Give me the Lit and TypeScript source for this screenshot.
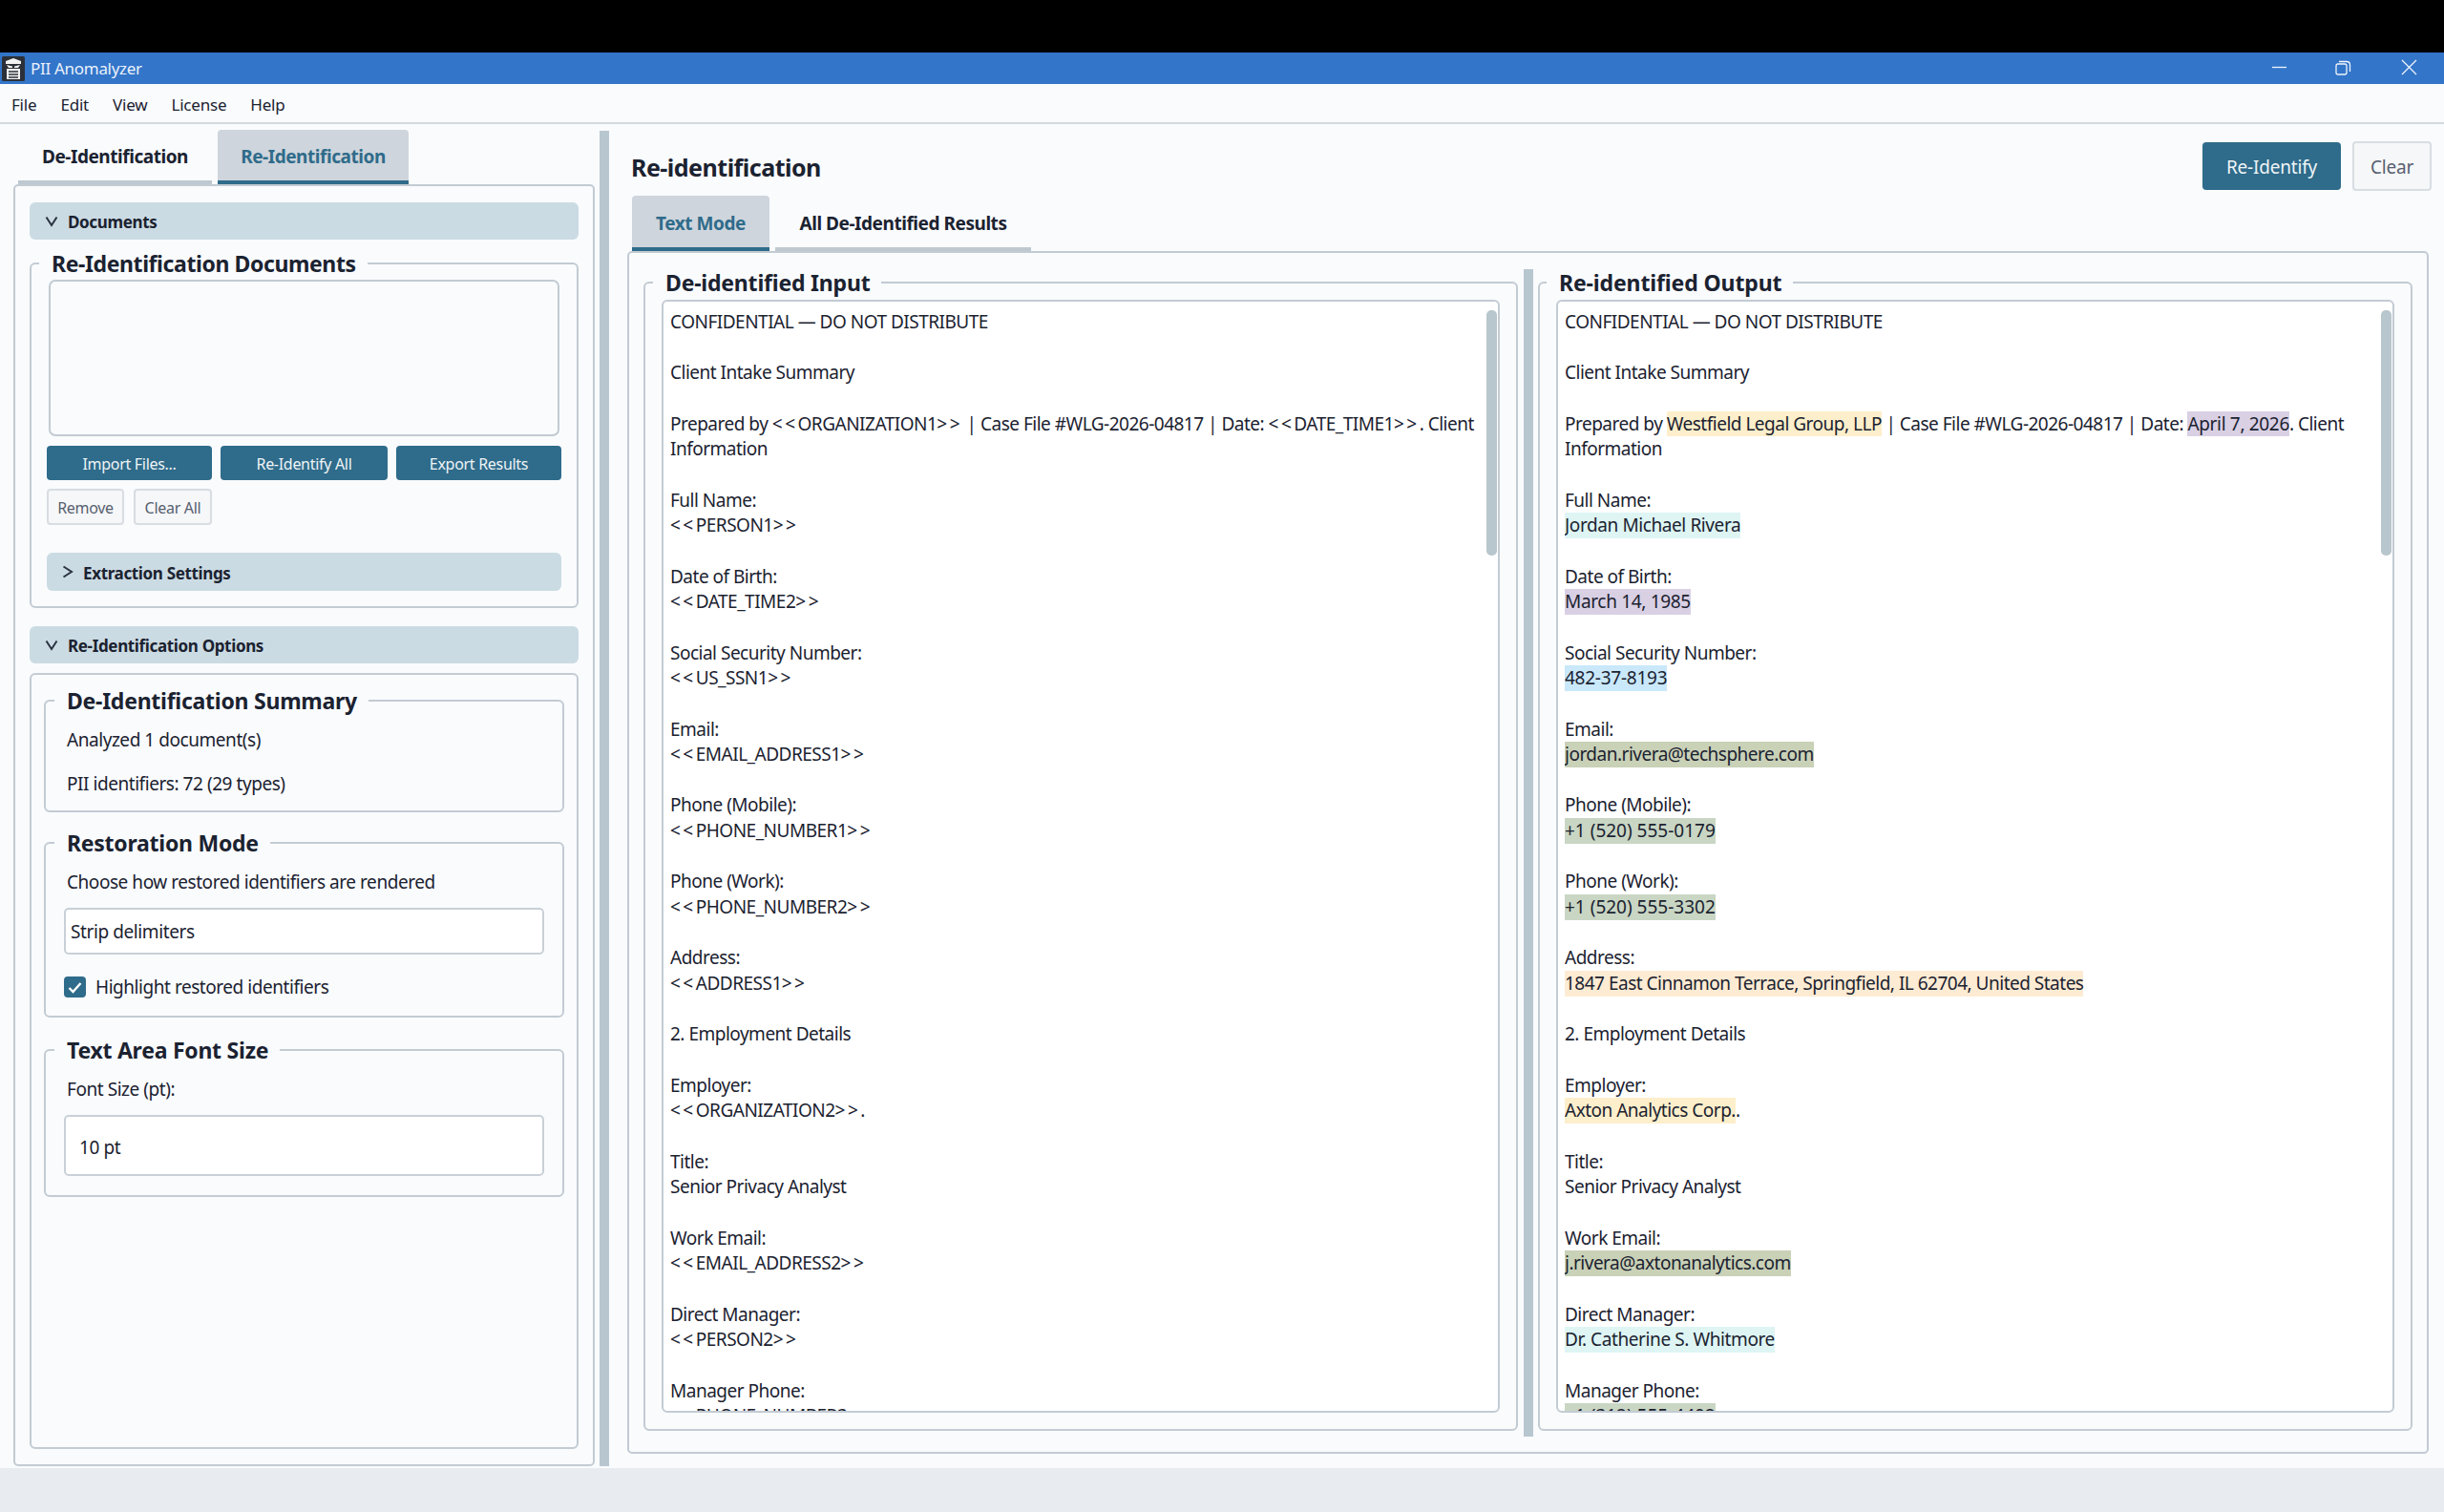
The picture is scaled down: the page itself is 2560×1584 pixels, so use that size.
import { LitElement, html, css } from "lit";
import { customElement } from "lit/decorators.js";

type Seg = string | [string, string];

const pairs: [string, string, string, string][] = [
  ["Full Name:", "<<PERSON1>>", "Jordan Michael Rivera", "person"],
  ["Date of Birth:", "<<DATE_TIME2>>", "March 14, 1985", "date"],
  ["Social Security Number:", "<<US_SSN1>>", "482-37-8193", "ssn"],
  ["Email:", "<<EMAIL_ADDRESS1>>", "jordan.rivera@techsphere.com", "email"],
  ["Phone (Mobile):", "<<PHONE_NUMBER1>>", "+1 (520) 555-0179", "phone"],
  ["Phone (Work):", "<<PHONE_NUMBER2>>", "+1 (520) 555-3302", "phone"],
  ["Address:", "<<ADDRESS1>>", "1847 East Cinnamon Terrace, Springfield, IL 62704, United States", "addr"],
];
const pairs2: [string, string, string, string][] = [
  ["Work Email:", "<<EMAIL_ADDRESS2>>", "j.rivera@axtonanalytics.com", "email"],
  ["Direct Manager:", "<<PERSON2>>", "Dr. Catherine S. Whitmore", "person"],
  ["Manager Phone:", "<<PHONE_NUMBER3>>", "+1 (312) 555-4402", "phone"],
];

function build(right: boolean): Seg[][] {
  const out: Seg[][] = [["CONFIDENTIAL — DO NOT DISTRIBUTE"], [""], ["Client Intake Summary"], [""]];
  out.push(
    right
      ? ["Prepared by ", ["Westfield Legal Group, LLP", "org"], " | Case File #WLG-2026-04817 | Date: ", ["April 7, 2026", "date"], ". Client"]
      : ["Prepared by <<ORGANIZATION1>> | Case File #WLG-2026-04817 | Date: <<DATE_TIME1>>. Client"]
  );
  out.push(["Information"], [""]);
  const add = (p: [string, string, string, string]) => {
    out.push([p[0]]);
    out.push(right ? [[p[2], p[3]]] : [p[1]]);
  };
  pairs.forEach((p) => {
    add(p);
    out.push([""]);
  });
  out.push(["2. Employment Details"], [""]);
  out.push(["Employer:"]);
  out.push(right ? [["Axton Analytics Corp.", "org"], "."] : ["<<ORGANIZATION2>>."]);
  out.push([""], ["Title:"], ["Senior Privacy Analyst"], [""]);
  pairs2.forEach((p, i) => {
    add(p);
    if (i < pairs2.length - 1) out.push([""]);
  });
  return out;
}

@customElement("app-root")
export class AppRoot extends LitElement {
  static styles = css`
    :host {
      display: flex;
      flex-direction: column;
      width: 2560px;
      height: 1584px;
      overflow: hidden;
      background: #f9fbfd;
      color: #1b2230;
      font-family: "Noto Sans", "Open Sans", sans-serif;
      font-size: 19px;
      --line: #c3cbd3;
      --teal: #2f6b8a;
    }
    .black { height: 55px; background: #000; flex: none; }
    .titlebar {
      height: 33px; flex: none; background: #3375c9; color: #e9f1fb;
      display: flex; align-items: center; font-size: 17px; letter-spacing: -0.3px;
    }
    .titlebar .app-icon { width: 24px; height: 26px; margin-left: 2px; margin-right: 6px; flex: none; }
    .titlebar .ctl { margin-left: auto; display: flex; }
    .ctl svg { display: block; }
    .menubar {
      height: 42px; flex: none; box-sizing: border-box; border-bottom: 2px solid #d3d9de;
      display: flex; align-items: center; padding-left: 12px; gap: 25px; padding-top: 2px;
      font-size: 17px; letter-spacing: -0.2px;
    }
    .main { flex: 1; min-height: 0; display: flex; }
    .status { height: 46px; flex: none; background: #e8ecf1; }

    .left { width: 609px; margin-left: 14px; margin-bottom: 2px; flex: none; display: flex; flex-direction: column; }
    .tabs { display: flex; flex: none; font-weight: 700; }
    .left .tabs { margin-top: 6px; height: 57px; padding-left: 5px; gap: 6px; }
    .tab {
      box-sizing: border-box; display: flex; align-items: center; justify-content: center;
      border-bottom: 4px solid #bec8d0; border-radius: 4px 4px 0 0; letter-spacing: -0.45px; font-size: 19px;
      padding-top: 3px;
    }
    .tab.on { background: #ced5dc; color: var(--teal); border-bottom-color: var(--teal); }
    .frame {
      box-sizing: border-box; border: 2px solid var(--line); border-radius: 5px; background: #f9fbfd;
    }
    .left .frame {
      flex: 1; min-height: 0; padding: 17px 15px 16px;
      display: flex; flex-direction: column;
    }
    .sec {
      box-sizing: border-box; height: 39px; flex: none; background: #cbdbe3; border-radius: 6px;
      display: flex; align-items: center; gap: 10px; padding-left: 16px;
      font-weight: 700; font-size: 17px; letter-spacing: -0.35px;
    }
    .sec span { padding-top: 2px; }
    .sec svg { flex: none; }
    fieldset {
      margin: 0; min-width: 0; box-sizing: border-box;
      border: 2px solid var(--line); border-radius: 6px;
    }
    legend {
      height: 32px; line-height: 32px; padding: 0 12px 0 13px; font-weight: 700;
      font-size: 23px; letter-spacing: -0.25px; margin-left: -8px;
    }
    .docs { margin-top: 10px; height: 376px; padding: 0 16px; flex: none; }
    .docs legend { height: 30px; line-height: 30px; letter-spacing: -0.4px; }
    .list {
      height: 164px; margin: 2px 2px 0; box-sizing: border-box;
      border: 2px solid var(--line); border-radius: 7px;
    }
    .btnrow { display: grid; grid-template-columns: 173px 175px 173px; gap: 9px; margin-top: 10px; }
    .btn {
      box-sizing: border-box; display: flex; align-items: center; justify-content: center;
      border-radius: 4px; font-size: 16px; letter-spacing: -0.3px; padding-top: 1px;
    }
    .btn.pri { background: var(--teal); color: #eef4f7; height: 36px; }
    .btn.sec2 {
      border: 2px solid #d8dde2; background: #f6f7f8; color: #566070; height: 38px;
    }
    .btnrow2 { display: flex; gap: 10px; margin-top: 9px; }
    .sec.sub { height: 40px; margin-top: 29px; }
    .opts { margin-top: 19px; }
    .container {
      flex: 1; min-height: 0; margin-top: 10px; padding: 11px 13px 0; box-sizing: border-box;
      border: 2px solid var(--line); border-radius: 6px;
      display: flex; flex-direction: column; gap: 16px;
    }
    .container fieldset { padding: 0 19px 0 22px; flex: none; }
    .container legend { margin-left: -13px; }
    .g1 { height: 133px; }
    .g2 { height: 199px; }
    .g3 { height: 170px; margin-top: 2px; }
    .row { font-size: 19px; letter-spacing: -0.45px; line-height: 26px; }
    .g1 .row.a { margin-top: 12px; }
    .g1 .row.b { margin-top: 20px; }
    .g2 .row.a { margin-top: 12px; }
    .input {
      box-sizing: border-box; background: #fff; border: 2px solid #c9d0d7; border-radius: 5px;
      margin-left: -3px; display: flex; align-items: center;
      font-size: 19px; letter-spacing: -0.4px;
    }
    .combo { height: 49px; margin-top: 14px; padding-left: 5px; }
    .check { display: flex; align-items: center; margin: 21px 0 0 -3px; gap: 10px; font-size: 19px; letter-spacing: -0.45px; }
    .check .box {
      width: 23px; height: 22px; background: var(--teal); border-radius: 4px; flex: none;
      display: flex; align-items: center; justify-content: center;
    }
    .g3 .row.a { margin-top: 12px; }
    .spin { height: 64px; margin-top: 14px; padding: 3px 0 0 14px; }

    .split { width: 10px; margin: 7px 0 2px 5px; background: #b8c6d0; flex: none; }
    .right {
      flex: 1; min-width: 0; display: flex; flex-direction: column;
      padding: 18px 13px 15px 19px;
    }
    .head { display: flex; align-items: center; height: 52px; flex: none; padding-left: 4px; }
    .head h1 { margin: 0; padding-top: 1px; font-size: 25px; font-weight: 700; letter-spacing: -0.5px; }
    .head .sp { flex: 1; }
    .head .btn { font-size: 19px; letter-spacing: -0.2px; padding-top: 2px; }
    .head .btn.pri { width: 145px; height: 50px; margin-right: 12px; }
    .head .btn.sec2 { width: 83px; height: 52px; }
    .right .tabs { height: 58px; margin-top: 5px; padding-left: 5px; gap: 6px; }
    .right .frame {
      flex: 1; min-height: 0; margin-right: 3px; padding: 15px 15px 16px;
      display: flex;
    }
    .pane { flex: 1; min-width: 0; margin-bottom: 6px; padding: 0 17px 17px; display: flex; flex-direction: column; }
    .pane legend { margin-left: -10px; letter-spacing: -0.12px; }
    .pane.first legend { margin-left: -9px; letter-spacing: -0.2px; }
    .vsplit { width: 10px; margin: 2px 5px 0 6px; background: #b8c6d0; flex: none; }
    .text {
      flex: 1; min-height: 0; position: relative; overflow: hidden; box-sizing: border-box;
      margin-top: 2px; background: #fff; border: 2px solid var(--line); border-radius: 6px;
      padding: 8px 0 0 7px; font-size: 19px; letter-spacing: -0.5px;
    }
    .text .clip { height: 100%; overflow: hidden; }
    .ln { height: 26.67px; line-height: 26.67px; white-space: pre; }
    .ln span { display: inline-block; height: 26.67px; }
    .ln .ang { letter-spacing: 2.5px; }
    .org { background: #fdefcb; }
    .date { background: #d9d0e4; letter-spacing: -0.33px; }
    .person { background: #def5f4; letter-spacing: -0.4px; }
    .ssn { background: #c9e8fa; letter-spacing: -0.25px; }
    .email { background: #c9d1b7; }
    .phone { background: #c9d6c4; letter-spacing: 0; }
    .addr { background: #fdebd3; }
    .thumb {
      position: absolute; top: 9px; right: 1px; width: 11px; height: 257px;
      background: #b8c6cd; border-radius: 5px;
    }
  `;

  chev(dir: "down" | "right") {
    return dir === "down"
      ? html`<svg width="14" height="12" viewBox="0 0 14 12" fill="none" stroke="#2a3240" stroke-width="2"><path d="M1.5 1.5 L7 10 L12.5 1.5"/></svg>`
      : html`<svg width="12" height="14" viewBox="0 0 12 14" fill="none" stroke="#2a3240" stroke-width="2"><path d="M1.5 1.5 L10 7 L1.5 12.5"/></svg>`;
  }

  plain(s: string) {
    return s
      .split(/(<<|>>)/)
      .map((p) => (p === "<<" || p === ">>" ? html`<span class="ang">${p}</span>` : p));
  }

  pane(title: string, right: boolean) {
    return html`<fieldset class="pane ${right ? "" : "first"}">
      <legend>${title}</legend>
      <div class="text">
        <div class="clip">
          ${build(right).map(
            (l) => html`<div class="ln">${l.map((s) =>
              typeof s === "string" ? this.plain(s) : html`<span class=${s[1]}>${s[0]}</span>`
            )}</div>`
          )}
        </div>
        <div class="thumb"></div>
      </div>
    </fieldset>`;
  }

  render() {
    return html`
      <div class="black"></div>
      <div class="titlebar">
        <svg class="app-icon" viewBox="0 0 24 26">
          <rect width="24" height="26" rx="1.5" fill="#2b3038"/>
          <path d="M4 5 L12 2 L20 5 L20 8 L4 8 Z" fill="#f2f2f2"/>
          <path d="M5 9 L11 10.5 L11 12 L7 12 Z M19 9 L13 10.5 L13 12 L17 12 Z" fill="#f2f2f2"/>
          <rect x="5" y="13" width="14" height="11" fill="#f2f2f2"/>
          <path d="M7 16 H17 M7 19 H17 M7 22 H17" stroke="#2b3038" stroke-width="1.4"/>
        </svg>
        <span>PII Anomalyzer</span>
        <div class="ctl">
          <svg width="195" height="33" viewBox="0 0 195 33" fill="none" stroke="#eef4fb" stroke-width="1.3">
            <path d="M15 15.5 H30"/>
            <rect x="82" y="12" width="11" height="11" rx="2"/>
            <path d="M85 9.5 H93 Q96.5 9.5 96.5 13 V20"/>
            <path d="M151 8 L166 23 M166 8 L151 23"/>
          </svg>
        </div>
      </div>
      <div class="menubar">
        <span>File</span><span>Edit</span><span>View</span><span>License</span><span>Help</span>
      </div>
      <div class="main">
        <div class="left">
          <div class="tabs">
            <div class="tab" style="width:203px">De-Identification</div>
            <div class="tab on" style="width:200px">Re-Identification</div>
          </div>
          <div class="frame">
            <div class="sec">${this.chev("down")}<span>Documents</span></div>
            <fieldset class="docs">
              <legend>Re-Identification Documents</legend>
              <div class="list"></div>
              <div class="btnrow">
                <div class="btn pri">Import Files...</div>
                <div class="btn pri">Re-Identify All</div>
                <div class="btn pri">Export Results</div>
              </div>
              <div class="btnrow2">
                <div class="btn sec2" style="width:81px">Remove</div>
                <div class="btn sec2" style="width:82px">Clear All</div>
              </div>
              <div class="sec sub">${this.chev("right")}<span>Extraction Settings</span></div>
            </fieldset>
            <div class="sec opts">${this.chev("down")}<span>Re-Identification Options</span></div>
            <div class="container">
              <fieldset class="g1">
                <legend>De-Identification Summary</legend>
                <div class="row a">Analyzed 1 document(s)</div>
                <div class="row b">PII identifiers: 72 (29 types)</div>
              </fieldset>
              <fieldset class="g2">
                <legend>Restoration Mode</legend>
                <div class="row a">Choose how restored identifiers are rendered</div>
                <div class="input combo">Strip delimiters</div>
                <div class="check">
                  <div class="box">
                    <svg width="15" height="13" viewBox="0 0 15 13" fill="none" stroke="#fff" stroke-width="2.4"><path d="M1.5 7 L5.5 11 L13.5 2"/></svg>
                  </div>
                  <span>Highlight restored identifiers</span>
                </div>
              </fieldset>
              <fieldset class="g3">
                <legend>Text Area Font Size</legend>
                <div class="row a">Font Size (pt):</div>
                <div class="input spin">10 pt</div>
              </fieldset>
            </div>
          </div>
        </div>
        <div class="split"></div>
        <div class="right">
          <div class="head">
            <h1>Re-identification</h1>
            <div class="sp"></div>
            <div class="btn pri">Re-Identify</div>
            <div class="btn sec2">Clear</div>
          </div>
          <div class="tabs">
            <div class="tab on" style="width:144px">Text Mode</div>
            <div class="tab" style="width:268px">All De-Identified Results</div>
          </div>
          <div class="frame">
            ${this.pane("De-identified Input", false)}
            <div class="vsplit"></div>
            ${this.pane("Re-identified Output", true)}
          </div>
        </div>
      </div>
      <div class="status"></div>
    `;
  }
}
